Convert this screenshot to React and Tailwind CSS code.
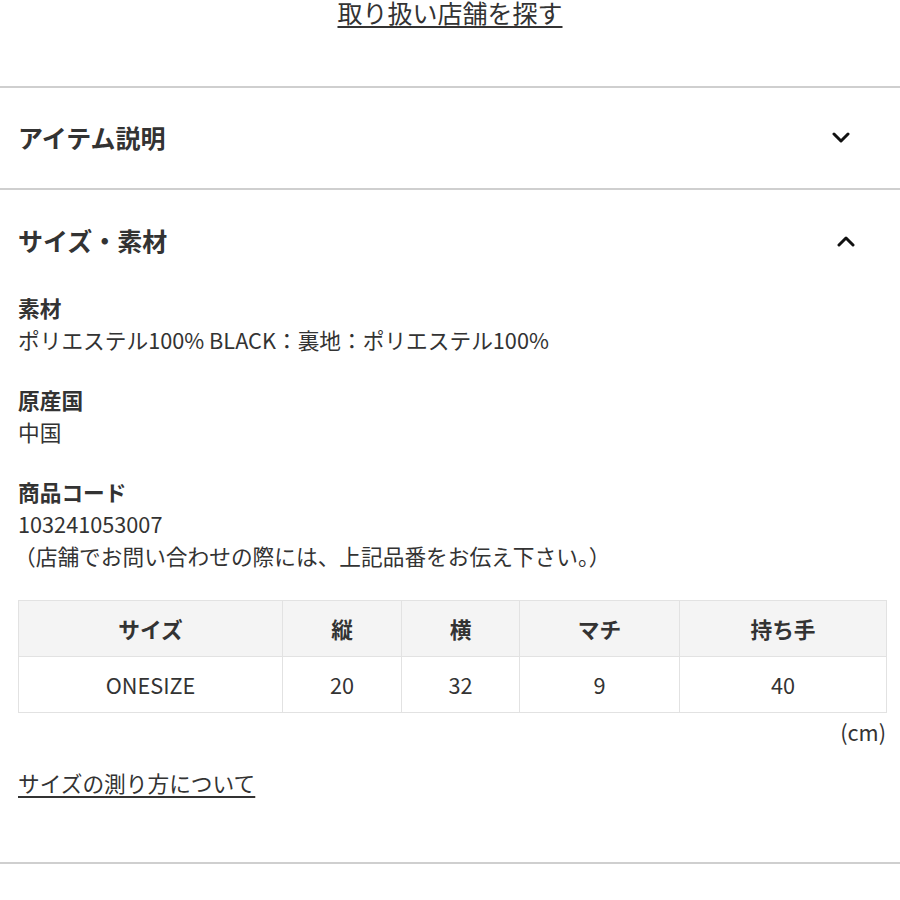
const font = { fontFamily: '"Noto Sans CJK JP", "Noto Sans", sans-serif' };

function Chevron({ up }) {
  return (
    <svg width="18" height="12" viewBox="0 0 18 12" fill="none">
      <polyline
        points={up ? "2,10 9,3 16,10" : "2,2 9,9 16,2"}
        stroke="#111"
        strokeWidth="3"
        strokeLinecap="round"
        strokeLinejoin="round"
      />
    </svg>
  );
}

const cols = ["サイズ", "縦", "横", "マチ", "持ち手"];
const vals = ["ONESIZE", "20", "32", "9", "40"];
const widths = ["w-[264px]", "w-[119px]", "w-[118px]", "w-[160px]", "w-[207px]"];

export default function App() {
  return (
    <div className="w-[900px] h-[900px] bg-white text-[#333] overflow-hidden" style={font}>
      <div className="text-center text-[25px] leading-[28px] mt-[-2px]">
        <a className="underline underline-offset-[3px] decoration-[2px]">取り扱い店舗を探す</a>
      </div>

      <div className="mt-[60px] border-t-2 border-[#cfcfcf]">
        <div className="h-[100px] flex items-center justify-between pl-[18px] pr-[50px]">
          <div className="text-[25px] font-bold">アイテム説明</div>
          <Chevron />
        </div>
      </div>

      <div className="border-t-2 border-[#cfcfcf]">
        <div className="h-[102px] flex items-center justify-between pl-[18px] pr-[45px]">
          <div className="text-[25px] font-bold">サイズ・素材</div>
          <Chevron up />
        </div>

        <div className="pl-[18px] pr-[14px] text-[21.7px] leading-[32px]">
          <div>
            <div className="font-bold">素材</div>
            <div>ポリエステル100% BLACK：裏地：ポリエステル100%</div>
          </div>
          <div className="mt-[28px]">
            <div className="font-bold">原産国</div>
            <div>中国</div>
          </div>
          <div className="mt-[28px]">
            <div className="font-bold">商品コード</div>
            <div>103241053007</div>
            <div className="ml-[-4px]">（店舗でお問い合わせの際には、上記品番をお伝え下さい。）</div>
          </div>

          <table className="mt-[28px] border-collapse table-fixed w-[868px]">
            <thead>
              <tr className="bg-[#f4f4f4]">
                {cols.map((c, i) => (
                  <th key={c} className={`${widths[i]} h-[56px] border border-[#e2e2e2] font-bold text-center`}>
                    {c}
                  </th>
                ))}
              </tr>
            </thead>
            <tbody>
              <tr>
                {vals.map((v, i) => (
                  <td key={i} className={`${widths[i]} h-[56px] border border-[#e2e2e2] text-center`}>
                    {v}
                  </td>
                ))}
              </tr>
            </tbody>
          </table>

          <div className="mt-[3px] text-right">(cm)</div>

          <div className="mt-[19px]">
            <a className="underline underline-offset-[4px] decoration-[2px]">サイズの測り方について</a>
          </div>
        </div>
      </div>

      <div className="mt-[63px] border-t-2 border-[#cfcfcf]"></div>
    </div>
  );
}
